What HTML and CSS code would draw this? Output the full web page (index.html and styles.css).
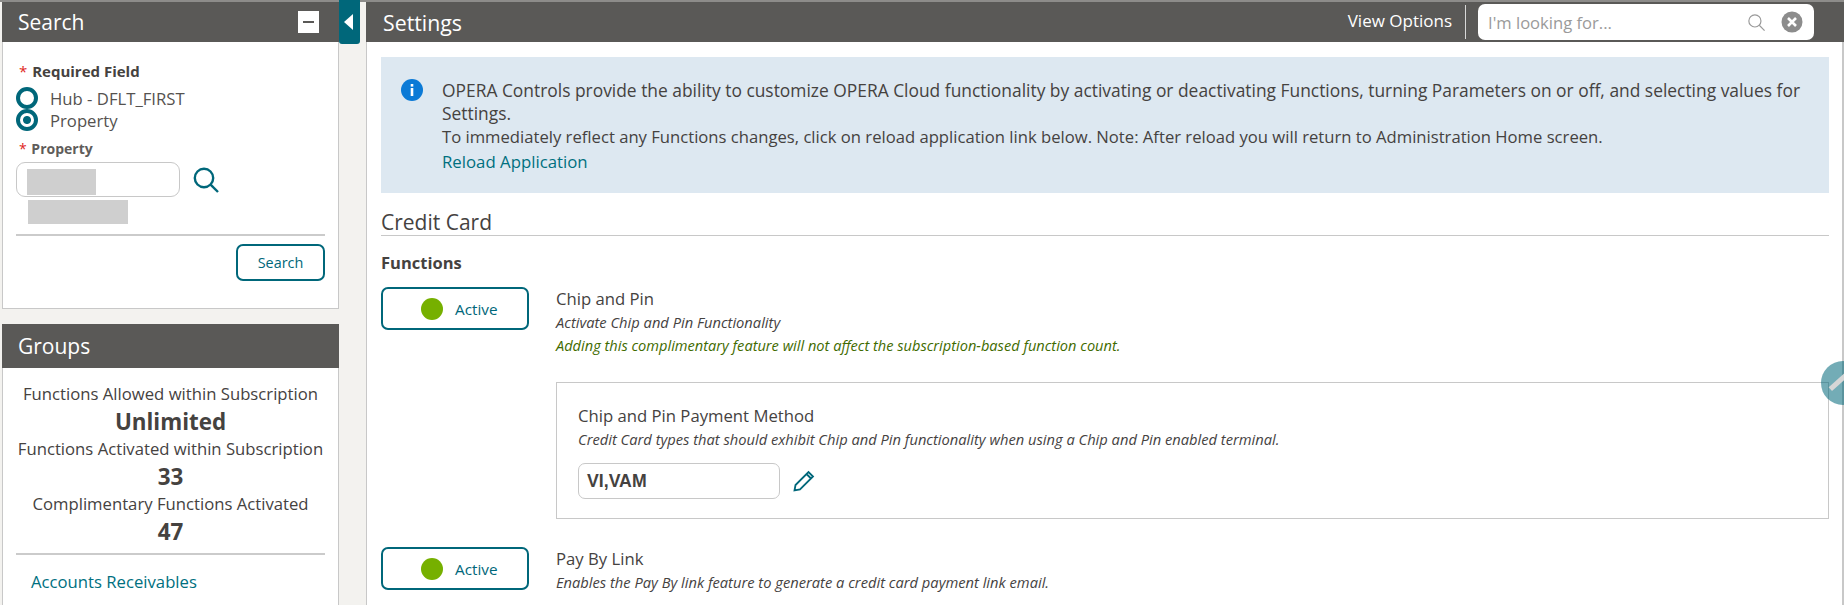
FILE: index.html
```html
<!DOCTYPE html>
<html lang="en">
<head>
    <meta charset="UTF-8">
    <title>Settings</title>
    <link rel="stylesheet" href="styles.css">
</head>
<body>
    <div class="page">
        <aside class="side">
            <section class="panel search-panel">
                <div class="panel-head">
                    <span>Search</span>
                    <span class="minus-box"><span class="minus"></span></span>
                </div>
                <div class="panel-body">
                    <div class="req-label"><span class="star">*</span> Required Field</div>
                    <div class="radio-row radio-first"><span class="radio"></span>Hub - DFLT_FIRST</div>
                    <div class="radio-row"><span class="radio checked"></span>Property</div>
                    <div class="req-label prop-label"><span class="star">*</span> Property</div>
                    <div class="prop-row">
                        <div class="prop-input"><span class="redact redact-a"></span></div>
                        <svg class="search-icon" viewBox="0 0 26 26" width="26" height="26"><circle cx="11" cy="11" r="9.2" fill="none" stroke="#00677a" stroke-width="2.4"/><path d="M17.6 17.6 L25 25" stroke="#00677a" stroke-width="2.4" fill="none"/></svg>
                    </div>
                    <span class="redact redact-b"></span>
                    <div class="rule"></div>
                    <div class="btn-row"><button class="btn" type="button">Search</button></div>
                </div>
            </section>
            <section class="panel groups-panel">
                <div class="panel-head groups-head">Groups</div>
                <div class="panel-body groups-body">
                    <div class="stat-label">Functions Allowed within Subscription</div>
                    <div class="stat-value">Unlimited</div>
                    <div class="stat-label">Functions Activated within Subscription</div>
                    <div class="stat-value">33</div>
                    <div class="stat-label">Complimentary Functions Activated</div>
                    <div class="stat-value">47</div>
                    <div class="rule groups-rule"></div>
                    <a class="link group-link" href="#">Accounts Receivables</a>
                </div>
            </section>
        </aside>
        <div class="collapse-col">
            <div class="collapse-tab"><span class="arrow"></span></div>
        </div>
        <main class="main">
            <header class="main-head">
                <span class="main-title">Settings</span>
                <span class="view-options">View Options</span>
                <span class="head-sep"></span>
                <div class="finder">
                    <span class="finder-text">I'm looking for...</span>
                    <svg class="finder-icon" viewBox="0 0 16 16" width="17" height="17"><circle cx="6.5" cy="6.5" r="5.7" fill="none" stroke="#999" stroke-width="1.1"/><path d="M10.6 10.6 L15.6 15.6" stroke="#999" stroke-width="1.1"/></svg>
                    <svg class="clear-icon" viewBox="0 0 22 22" width="22" height="22"><circle cx="11" cy="11" r="10.5" fill="#8c8c8c"/><path d="M7 7 L15 15 M15 7 L7 15" stroke="#fff" stroke-width="2.6"/></svg>
                </div>
            </header>
            <div class="content">
                <div class="info-box">
                    <svg class="info-icon" viewBox="0 0 22 22" width="22" height="22"><circle cx="11" cy="11" r="11" fill="#0b7ad6"/><rect x="9.7" y="9" width="2.6" height="8" fill="#fff"/><rect x="9.7" y="5" width="2.6" height="2.6" fill="#fff"/></svg>
                    <div class="info-text">
                        <p class="info-lead">OPERA Controls provide the ability to customize OPERA Cloud functionality by activating or deactivating Functions, turning Parameters on or off, and selecting values for Settings.</p>
                        <p>To immediately reflect any Functions changes, click on reload application link below. Note: After reload you will return to Administration Home screen.</p>
                        <a class="link reload" href="#">Reload Application</a>
                    </div>
                </div>
                <h2 class="section-title">Credit Card</h2>
                <h3 class="sub-title">Functions</h3>

                <div class="fn-row">
                    <button class="toggle" type="button"><span class="dot"></span>Active</button>
                    <div class="fn-info">
                        <div class="fn-name">Chip and Pin</div>
                        <div class="fn-desc">Activate Chip and Pin Functionality</div>
                        <div class="fn-note">Adding this complimentary feature will not affect the subscription-based function count.</div>
                    </div>
                </div>

                <div class="param-box">
                    <div class="fn-name">Chip and Pin Payment Method</div>
                    <div class="fn-desc">Credit Card types that should exhibit Chip and Pin functionality when using a Chip and Pin enabled terminal.</div>
                    <div class="param-row">
                        <div class="param-input">VI,VAM</div>
                        <svg class="pencil" viewBox="0 0 22 22" width="22" height="22"><path d="M1.5 20.5 L2.5 15 L15.5 2 L20 6.5 L7 19.5 Z M13.5 4 L18 8.5" fill="none" stroke="#00677a" stroke-width="1.8"/></svg>
                    </div>
                </div>

                <div class="fn-row fn-row-last">
                    <button class="toggle" type="button"><span class="dot"></span>Active</button>
                    <div class="fn-info">
                        <div class="fn-name">Pay By Link</div>
                        <div class="fn-desc">Enables the Pay By link feature to generate a credit card payment link email.</div>
                    </div>
                </div>
            </div>
        </main>
    </div>
    <div class="float-btn"><span class="float-mark"></span></div>
</body>
</html>
```

FILE: styles.css
```css
:root {
    --teal: #00677a;
    --head: #5a5957;
    --text: #45423f;
    --line: #c8c8c8;
}
* {
    box-sizing: border-box;
}
html, body {
    height: 605px;
    overflow: hidden;
}
body {
    margin: 0;
    background-color: #f3f2ef;
    color: var(--text);
    font-family: 'Open Sans', sans-serif;
    font-size: 16.7px;
}
.page {
    display: flex;
    height: 605px;
    padding-top: 2px;
    box-shadow: inset 0 2px 0 #8d8c8a;
}
.side {
    width: 337px;
    margin-left: 2px;
    flex: none;
}
.panel {
    background-color: white;
    border: 1px solid var(--line);
    border-top: 0;
}
.panel-head {
    display: flex;
    align-items: center;
    justify-content: space-between;
    height: 40px;
    margin: 0 -1px;
    padding: 0 20px 0 16px;
    background-color: var(--head);
    color: white;
    font-size: 21px;
}
.minus-box {
    display: flex;
    align-items: center;
    justify-content: center;
    width: 21px;
    height: 22px;
    background-color: white;
}
.minus {
    width: 11px;
    height: 2px;
    background-color: var(--head);
}
.search-panel {
    height: 307px;
}
.search-panel .panel-body {
    padding: 20px 13px 0 13px;
}
.req-label {
    font-size: 15px;
    font-weight: bold;
    line-height: 18px;
    padding-left: 3px;
}
.star {
    color: #e0251b;
    font-weight: normal;
    margin-right: 1px;
}
.prop-label {
    color: #5f5d5b;
    font-size: 14px;
    margin-top: 9px;
}
.radio-row {
    display: flex;
    align-items: center;
    height: 22px;
    color: #55524f;
}
.radio-first {
    margin-top: 7px;
}
.radio {
    width: 22px;
    height: 22px;
    margin-right: 12px;
    border: 4px solid var(--teal);
    border-radius: 50%;
    flex: none;
}
.radio.checked {
    background: radial-gradient(circle, var(--teal) 0 3.5px, white 4.5px);
}
.prop-row {
    display: flex;
    align-items: center;
    margin-top: 4px;
}
.prop-input {
    width: 164px;
    height: 35px;
    padding: 6px 0 0 10px;
    border: 1px solid var(--line);
    border-radius: 9px;
}
.redact {
    display: block;
    background-color: #cfcfcf;
}
.redact-a {
    width: 69px;
    height: 26px;
}
.redact-b {
    width: 100px;
    height: 24px;
    margin: 3px 0 0 12px;
}
.search-icon {
    margin-left: 13px;
}
.rule {
    height: 2px;
    background-color: #cbcbcb;
}
.search-panel .rule {
    margin-top: 10px;
}
.btn-row {
    display: flex;
    justify-content: flex-end;
    margin-top: 8px;
}
.btn {
    width: 89px;
    height: 37px;
    background-color: white;
    border: 2px solid var(--teal);
    border-radius: 7px;
    color: var(--teal);
    font-family: inherit;
    font-size: 14.4px;
}
.groups-panel {
    height: 281px;
    margin-top: 15px;
    border-bottom: 0;
}
.groups-head {
    height: 44px;
}
.groups-body {
    padding: 13px 13px 0 13px;
    text-align: center;
}
.stat-label {
    height: 27px;
    line-height: 25px;
    white-space: nowrap;
}
.stat-value {
    height: 28px;
    line-height: 28px;
    font-size: 22.4px;
    font-weight: bold;
}
.groups-rule {
    margin-top: 7px;
}
.group-link {
    display: block;
    margin: 15px 0 0 15px;
    text-align: left;
}
.link {
    color: #00707f;
    text-decoration: none;
}
.collapse-col {
    width: 27px;
    flex: none;
}
.collapse-tab {
    display: flex;
    align-items: center;
    justify-content: center;
    width: 21px;
    height: 44px;
    margin-top: -2px;
    background-color: var(--teal);
    border-radius: 0 0 3px 3px;
}
.arrow {
    width: 0;
    height: 0;
    border-top: 8px solid transparent;
    border-bottom: 8px solid transparent;
    border-right: 9px solid white;
    margin-right: 2px;
}
.main {
    flex: 1;
    background-color: white;
    border-left: 1px solid var(--line);
    border-right: 2px solid var(--line);
    min-width: 0;
}
.main-head {
    display: flex;
    align-items: center;
    height: 40px;
    margin: 0 -2px 0 -1px;
    padding: 0 30px 0 17px;
    background-color: var(--head);
    color: white;
}
.main-title {
    font-size: 21.3px;
    margin-right: auto;
}
.view-options {
    font-size: 17px;
    margin-top: -4px;
}
.head-sep {
    width: 1px;
    height: 34px;
    margin: 0 12px 0 13px;
    background-color: #d8d8d8;
}
.finder {
    display: flex;
    align-items: center;
    width: 336px;
    height: 36px;
    padding: 0 11px 0 10px;
    background-color: white;
    border-radius: 7px;
}
.finder-text {
    flex: 1;
    color: #9a9a9a;
    font-size: 16.6px;
}
.clear-icon {
    margin-left: 16px;
}
.content {
    padding: 15px 13px 0 14px;
}
.info-box {
    display: flex;
    height: 136px;
    padding: 22px 12px 0 20px;
    background-color: #dde8f1;
}
.info-icon {
    flex: none;
    margin: 0 19px 0 0;
}
.info-text {
    font-size: 16.65px;
    line-height: 23px;
}
.info-text p {
    margin: 0;
}
.info-text .info-lead {
    font-size: 17.4px;
}
.reload {
    display: block;
    margin-top: 2px;
    line-height: 24px;
    font-size: 16.8px;
}
.section-title {
    height: 43px;
    margin: 0;
    padding-top: 15px;
    border-bottom: 1px solid var(--line);
    font-size: 21px;
    line-height: 28px;
    font-weight: normal;
}
.sub-title {
    margin: 16px 0 0 0;
    font-size: 16.5px;
    line-height: 22px;
    font-weight: bold;
}
.fn-row {
    display: flex;
    margin-top: 13px;
}
.toggle {
    display: flex;
    align-items: center;
    width: 148px;
    height: 43px;
    padding: 0 0 0 38px;
    background-color: white;
    border: 2px solid var(--teal);
    border-radius: 7px;
    color: var(--teal);
    font-family: inherit;
    font-size: 15.3px;
    flex: none;
}
.dot {
    width: 22px;
    height: 22px;
    margin-right: 12px;
    background-color: #76b000;
    border-radius: 50%;
}
.fn-info {
    margin-left: 27px;
}
.fn-name {
    line-height: 23px;
}
.fn-desc {
    font-size: 14.7px;
    font-style: italic;
    line-height: 24px;
}
.fn-note {
    font-size: 14.6px;
    font-style: italic;
    line-height: 23px;
    color: #3f6b00;
}
.param-box {
    height: 137px;
    margin: 25px 0 0 175px;
    padding: 21px 18px 0 21px;
    border: 1px solid var(--line);
}
.param-row {
    display: flex;
    align-items: center;
    margin-top: 12px;
}
.param-input {
    width: 202px;
    height: 36px;
    padding-left: 8px;
    border: 1px solid var(--line);
    border-radius: 7px;
    font-family: 'Liberation Sans', sans-serif;
    font-size: 17.7px;
    font-weight: bold;
    line-height: 34px;
}
.pencil {
    margin-left: 13px;
}
.fn-row-last {
    margin-top: 28px;
}
.float-btn {
    position: absolute;
    left: 1821px;
    top: 361px;
    width: 44px;
    height: 44px;
    background-color: rgba(0, 103, 122, 0.55);
    border-radius: 50%;
    overflow: hidden;
}
.float-mark {
    position: absolute;
    left: 6px;
    top: 17px;
    width: 26px;
    height: 5px;
    background-color: #d6d6d6;
    transform: rotate(-42deg);
}
```
